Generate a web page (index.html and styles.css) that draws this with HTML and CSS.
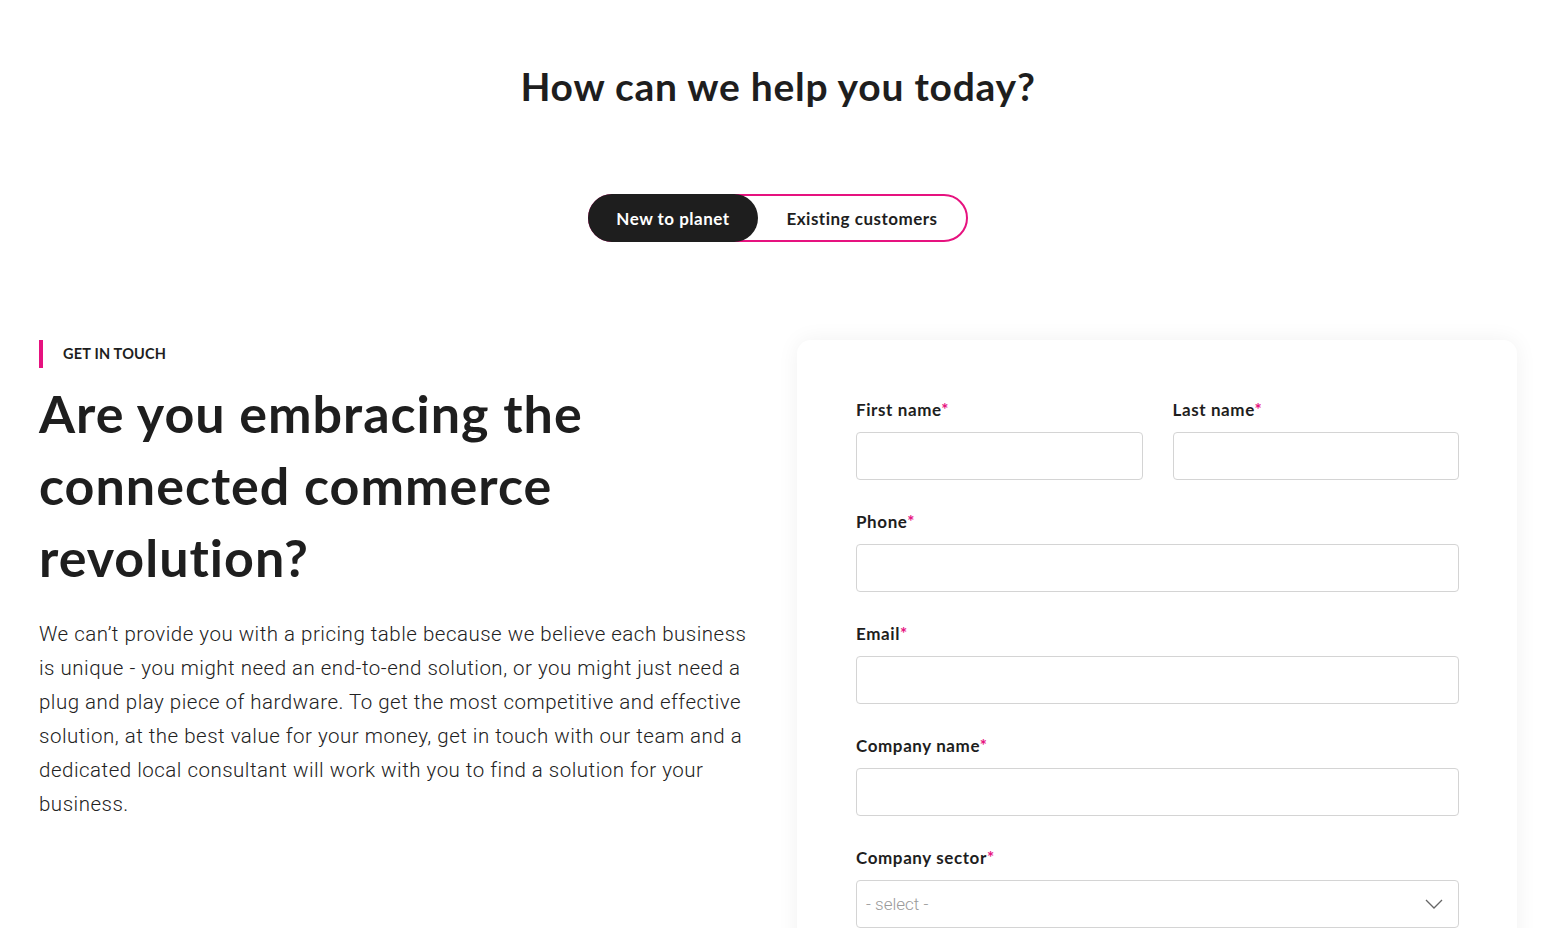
FILE: index.html
```html
<!DOCTYPE html>
<html lang="en">
<head>
<meta charset="utf-8">
<title>Contact</title>
<link rel="stylesheet" href="styles.css">
</head>
<body>
<main class="page">
  <h1 class="title">How can we help you today?</h1>
  <div class="toggle">
    <button class="toggle-btn active">New to planet</button>
    <button class="toggle-btn">Existing customers</button>
  </div>
  <section class="contact">
    <div class="intro">
      <div class="eyebrow">GET IN TOUCH</div>
      <h2 class="headline">Are you embracing the connected commerce revolution?</h2>
      <p class="lead">We can’t provide you with a pricing table because we believe each business is unique - you might need an end-to-end solution, or you might just need a plug and play piece of hardware. To get the most competitive and effective solution, at the best value for your money, get in touch with our team and a dedicated local consultant will work with you to find a solution for your business.</p>
    </div>
    <form class="card">
      <div class="row two">
        <label class="field"><span class="label">First name<span class="req">*</span></span><input class="input" type="text"></label>
        <label class="field"><span class="label">Last name<span class="req">*</span></span><input class="input" type="text"></label>
      </div>
      <label class="field"><span class="label">Phone<span class="req">*</span></span><input class="input" type="text"></label>
      <label class="field"><span class="label">Email<span class="req">*</span></span><input class="input" type="text"></label>
      <label class="field"><span class="label">Company name<span class="req">*</span></span><input class="input" type="text"></label>
      <label class="field"><span class="label">Company sector<span class="req">*</span></span>
        <span class="select">
          <span class="placeholder">- select -</span>
          <svg class="chev" width="18" height="10" viewBox="0 0 18 10"><path d="M1 1 L9 9 L17 1" fill="none" stroke="#666" stroke-width="1.3"/></svg>
        </span>
      </label>
    </form>
  </section>
</main>
</body>
</html>
```
FILE: styles.css
```css
* { box-sizing: border-box; }
html, body { margin: 0; padding: 0; background: #fff; }
body {
  font-family: Lato, "Noto Sans", sans-serif;
  color: #1e1e1e;
  font-variant-ligatures: none;
}
.page {
  padding: 60px 39px 0;
}
.title {
  margin: 0;
  text-align: center;
  font-size: 39px;
  font-weight: 700;
  line-height: 52px;
  letter-spacing: 0.75px;
}
.toggle {
  display: flex;
  width: 380px;
  height: 48px;
  margin: 82px auto 0;
  border: 2px solid #e6127f;
  border-radius: 24px;
}
.toggle-btn {
  font-family: inherit;
  font-size: 17px;
  font-weight: 700;
  letter-spacing: 0.5px;
  border: none;
  background: transparent;
  color: #1e1e1e;
  border-radius: 24px;
  padding: 0;
  flex: 1;
}
.toggle-btn.active {
  flex: 0 0 170px;
  background: #1e1e1e;
  color: #fff;
  margin: -2px 0 -2px -2px;
}
.contact {
  display: grid;
  grid-template-columns: 1fr 720px;
  gap: 40px;
  margin-top: 98px;
}
.eyebrow {
  border-left: 4px solid #e6127f;
  padding-left: 20px;
  height: 28px;
  line-height: 28px;
  font-size: 14.5px;
  font-weight: 700;
  letter-spacing: 0.2px;
}
.headline {
  margin: 9px 0 0;
  font-size: 52px;
  line-height: 72px;
  font-weight: 700;
  letter-spacing: 1px;
  max-width: 620px;
}
.lead {
  margin: 24px 0 0;
  font-family: Roboto, Lato, sans-serif;
  font-size: 20.5px;
  font-weight: 300;
  line-height: 34px;
  letter-spacing: 0.5px;
  color: #222;
  max-width: 712px;
}
.card {
  background: #fff;
  border-radius: 14px;
  box-shadow: 0 0 22px rgba(0,0,0,0.06);
  padding: 58px 58px 0 59px;
  height: 620px;
  display: flex;
  flex-direction: column;
  gap: 30px;
}
.row.two {
  display: grid;
  grid-template-columns: 1fr 1fr;
  gap: 30px;
}
.field {
  display: flex;
  flex-direction: column;
  gap: 10px;
}
.label {
  font-size: 17px;
  font-weight: 700;
  line-height: 24px;
  letter-spacing: 0.6px;
}
.req { color: #e6127f; }
.input {
  height: 48px;
  border: 1.5px solid #d4d4d4;
  border-radius: 4px;
  font-family: inherit;
  font-size: 16px;
  padding: 0 10px;
}
.select {
  height: 48px;
  border: 1.5px solid #d4d4d4;
  border-radius: 4px;
  display: flex;
  align-items: center;
  justify-content: space-between;
  padding: 0 15px 0 9px;
}
.placeholder {
  color: #9a9a9a;
  font-family: Roboto, Lato, sans-serif;
  font-size: 17px;
  font-weight: 300;
}
```
